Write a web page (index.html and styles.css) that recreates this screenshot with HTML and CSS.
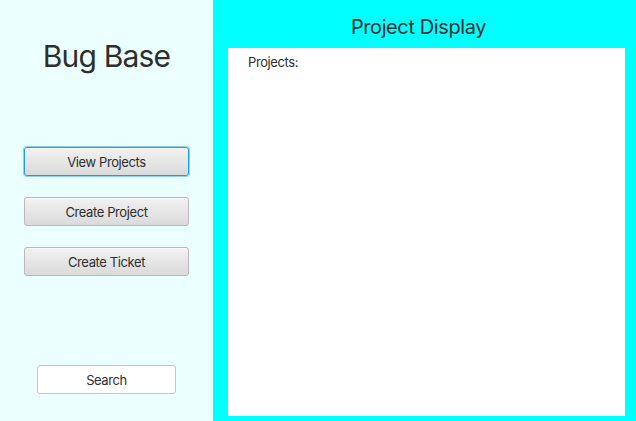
FILE: index.html
```html
<!DOCTYPE html>
<html>
<head>
<meta charset="utf-8">
<link rel="stylesheet" href="styles.css">
</head>
<body>
<div class="app">
  <aside class="sidebar">
    <h1 class="brand">Bug Base</h1>
    <nav class="menu">
      <button class="btn focused">View Projects</button>
      <button class="btn">Create Project</button>
      <button class="btn">Create Ticket</button>
    </nav>
    <div class="search-wrap">
      <button class="btn search">Search</button>
    </div>
  </aside>
  <main class="main">
    <h2 class="title">Project Display</h2>
    <section class="panel">
      <div class="label">Projects:</div>
    </section>
  </main>
</div>
</body>
</html>
```

FILE: styles.css
```css
* { box-sizing: border-box; }
html, body { margin: 0; padding: 0; }
body {
  width: 636px;
  height: 421px;
  overflow: hidden;
  font-family: Inter, "Noto Sans", sans-serif;
  color: #2e2e2e;
}
.app {
  display: flex;
  width: 636px;
  height: 421px;
}
.sidebar {
  width: 213px;
  flex: none;
  background: #ebffff;
  display: flex;
  flex-direction: column;
  align-items: center;
}
.brand {
  margin: 38px 0 0;
  font-size: 30px;
  font-weight: 400;
  line-height: 36px;
  letter-spacing: -0.8px;
  color: #2e2e2e;
}
.menu {
  margin-top: 73px;
  display: flex;
  flex-direction: column;
  gap: 21px;
}
.btn {
  width: 165px;
  height: 29px;
  padding: 0;
  font-family: Inter, "Noto Sans", sans-serif;
  font-size: 13px;
  letter-spacing: -0.4px;
  color: #2e2e2e;
  border: 1px solid #b8b8b8;
  border-radius: 3px;
  background: linear-gradient(#f2f2f2, #dadada);
  box-shadow: inset 0 1px 0 #fafafa;
}
.btn.focused {
  border-color: #1a9fd8;
  box-shadow: 0 0 0 1px #8fd3f0, inset 0 1px 0 #fafafa;
}
.search-wrap {
  margin-top: auto;
  margin-bottom: 27px;
  display: flex;
}
.btn.search {
  width: 139px;
  height: 29px;
  background: #ffffff;
  border-color: #c4c4c4;
  box-shadow: none;
}
.main {
  flex: 1;
  background: #00ffff;
  display: flex;
  flex-direction: column;
  padding: 0 11px 5px 15px;
}
.title {
  margin: 14px 0 0;
  height: 34px;
  font-size: 20px;
  font-weight: 400;
  line-height: 26px;
  letter-spacing: -0.4px;
  text-align: center;
  padding-right: 16px;
  color: #2e2e2e;
}
.panel {
  flex: 1;
  background: #ffffff;
  padding: 6px 20px;
}
.label {
  font-size: 13px;
  line-height: 16px;
  letter-spacing: -0.4px;
  color: #2e2e2e;
}
```
